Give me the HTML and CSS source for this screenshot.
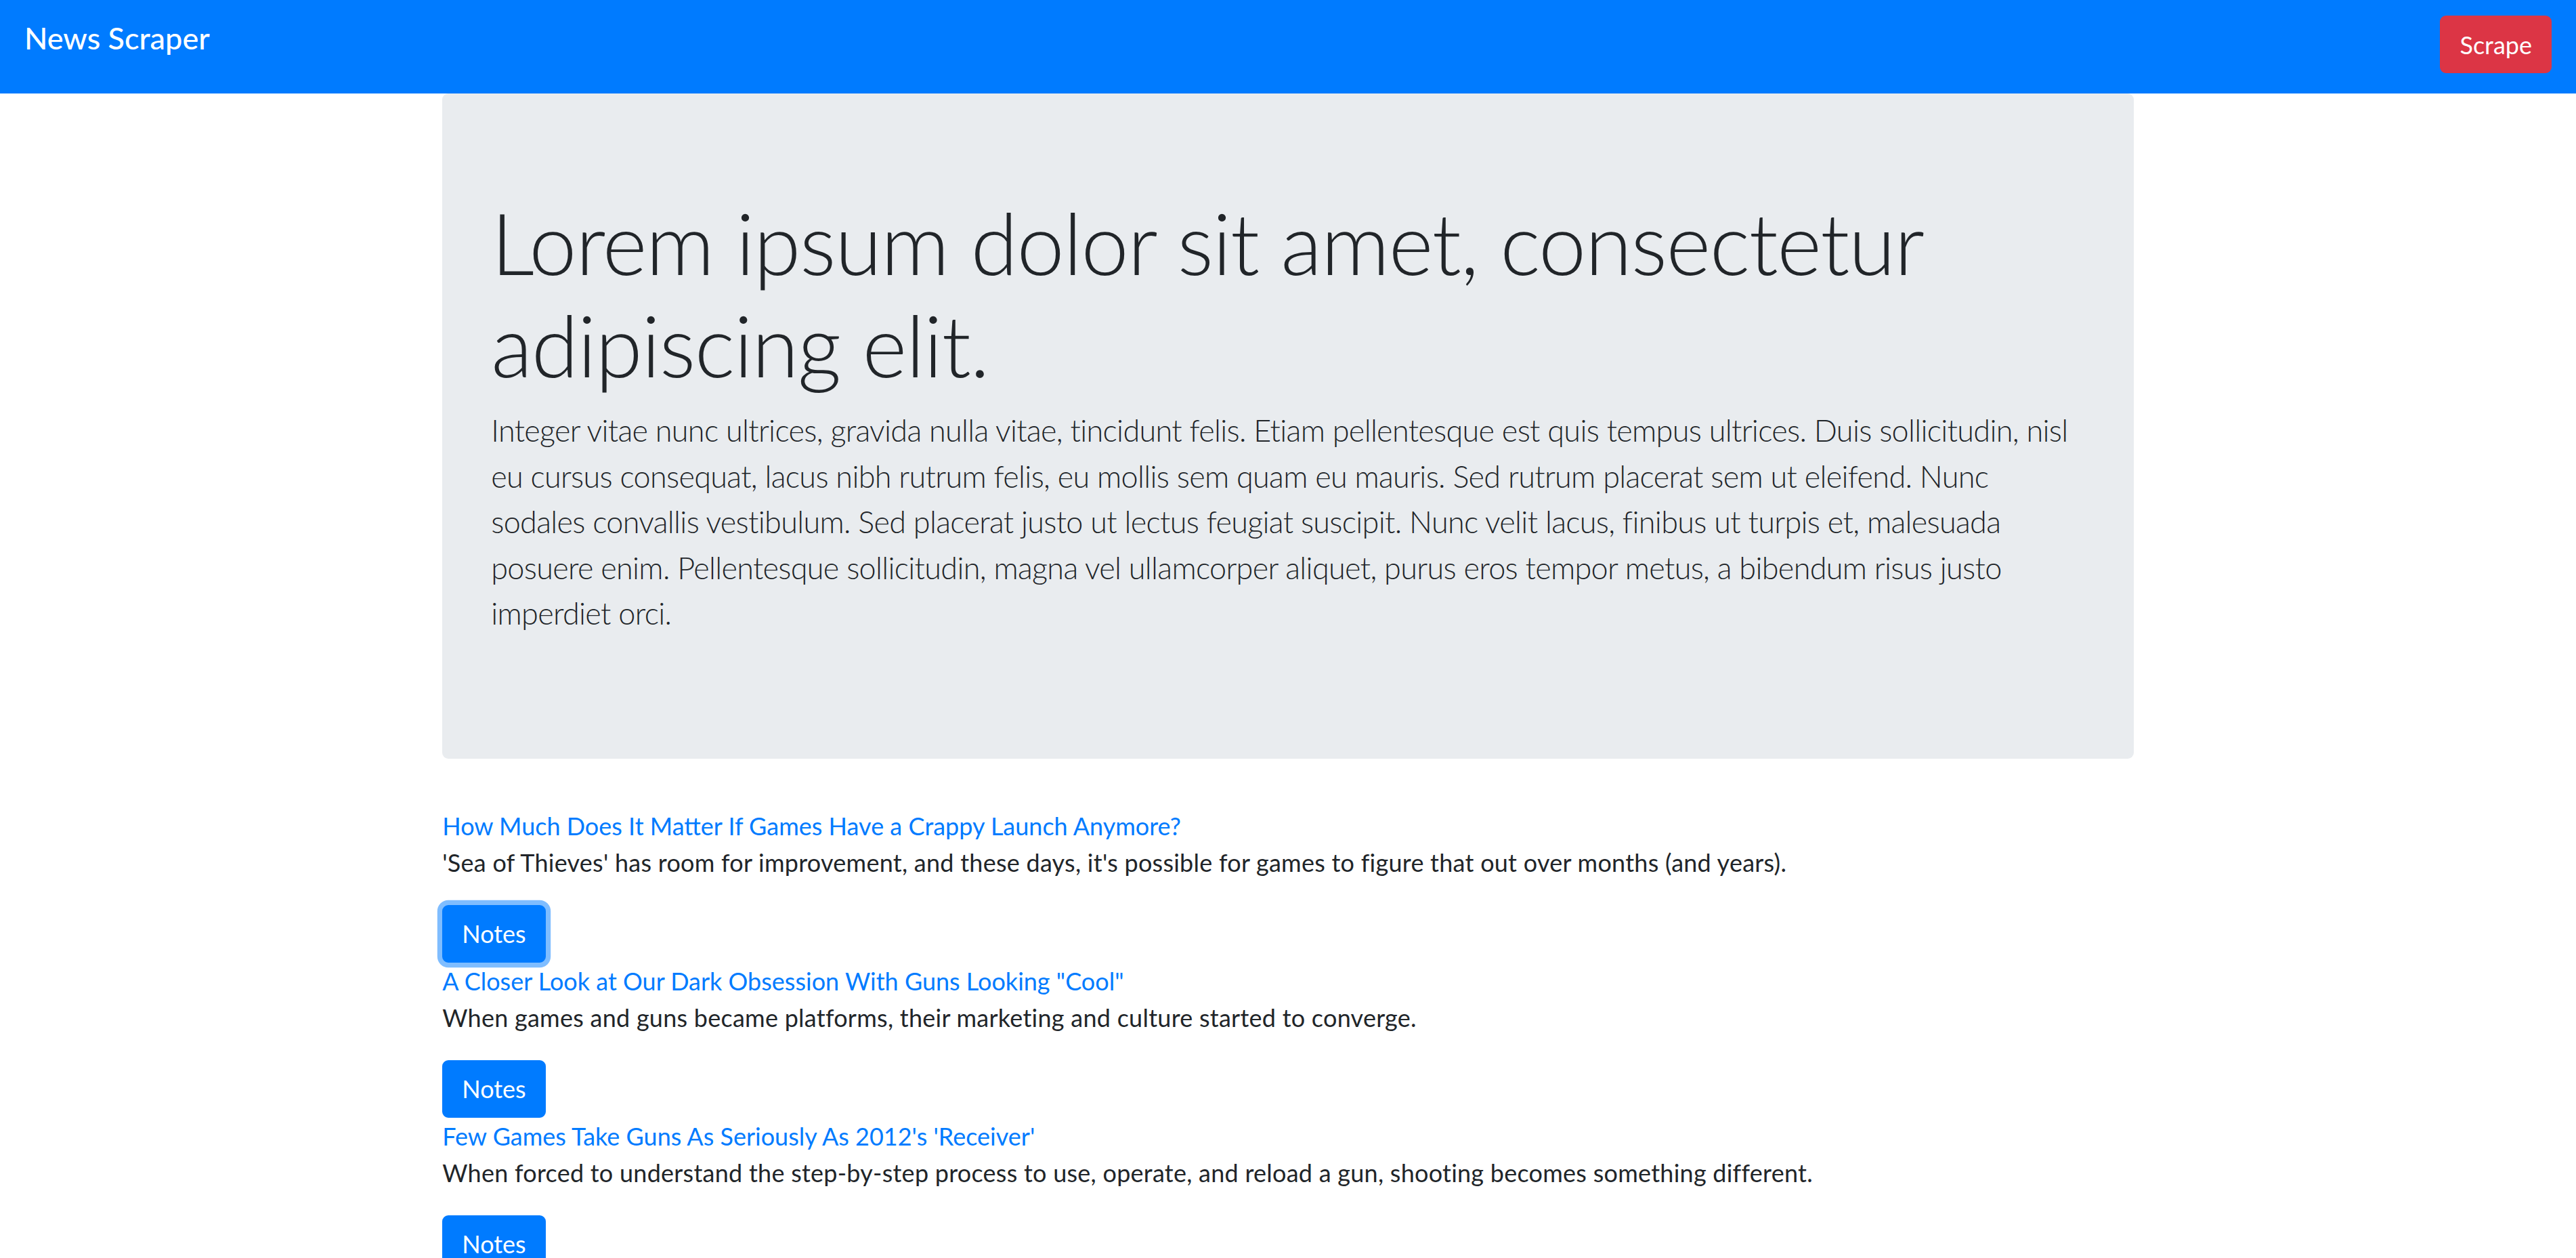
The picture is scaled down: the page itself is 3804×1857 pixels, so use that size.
FILE: index.html
```html
<!DOCTYPE html>
<html lang="en">
<head>
<meta charset="utf-8">
<title>News Scraper</title>
<link rel="stylesheet" href="styles.css">
</head>
<body>
<nav class="navbar">
  <a class="navbar-brand" href="#">News Scraper</a>
  <button class="btn btn-danger" type="button">Scrape</button>
</nav>

<main class="container">
  <section class="jumbotron">
    <h1 class="display-4">Lorem ipsum dolor sit amet, consectetur adipiscing elit.</h1>
    <p class="lead">Integer vitae nunc ultrices, gravida nulla vitae, tincidunt felis. Etiam pellentesque est quis tempus ultrices. Duis sollicitudin, nisl eu cursus consequat, lacus nibh rutrum felis, eu mollis sem quam eu mauris. Sed rutrum placerat sem ut eleifend. Nunc sodales convallis vestibulum. Sed placerat justo ut lectus feugiat suscipit. Nunc velit lacus, finibus ut turpis et, malesuada posuere enim. Pellentesque sollicitudin, magna vel ullamcorper aliquet, purus eros tempor metus, a bibendum risus justo imperdiet orci.</p>
  </section>

  <div class="articles">
    <article class="article">
      <a class="article-title" href="#">How Much Does It Matter If Games Have a Crappy Launch Anymore?</a>
      <p class="article-desc">'Sea of Thieves' has room for improvement, and these days, it's possible for games to figure that out over months (and years).</p>
      <button class="btn btn-primary is-focused" type="button">Notes</button>
    </article>
    <article class="article">
      <a class="article-title" href="#">A Closer Look at Our Dark Obsession With Guns Looking "Cool"</a>
      <p class="article-desc">When games and guns became platforms, their marketing and culture started to converge.</p>
      <button class="btn btn-primary" type="button">Notes</button>
    </article>
    <article class="article">
      <a class="article-title" href="#">Few Games Take Guns As Seriously As 2012's 'Receiver'</a>
      <p class="article-desc">When forced to understand the step-by-step process to use, operate, and reload a gun, shooting becomes something different.</p>
      <button class="btn btn-primary" type="button">Notes</button>
    </article>
  </div>
</main>
</body>
</html>
```

FILE: styles.css
```css
html, body {
  margin: 0;
  padding: 0;
}

body {
  font-family: Lato, "Liberation Sans", sans-serif;
  font-size: 36px;
  line-height: 1.5;
  font-weight: 400;
  color: #212529;
  background: #ffffff;
}

/* Navbar */
.navbar {
  display: flex;
  justify-content: space-between;
  align-items: flex-start;
  height: 138px;
  box-sizing: border-box;
  padding: 23px 36px 0;
  background-color: #007bff;
}

.navbar-brand {
  font-size: 45px;
  font-weight: 500;
  line-height: 67.5px;
  color: #ffffff;
  text-decoration: none;
  white-space: nowrap;
}

/* Buttons */
.btn {
  display: inline-block;
  font-family: inherit;
  font-size: 36px;
  line-height: 54px;
  font-weight: 400;
  padding: 13.5px 27px;
  border: 2.25px solid transparent;
  border-radius: 9px;
  color: #ffffff;
  cursor: pointer;
  margin: 0;
}

.btn-danger {
  background-color: #dc3545;
  border-color: #dc3545;
}

.btn-primary {
  background-color: #007bff;
  border-color: #007bff;
}

.btn-primary.is-focused {
  box-shadow: 0 0 0 7.2px rgba(0, 123, 255, 0.5);
}

/* Layout */
.container {
  max-width: 2565px;
  margin: 0 auto;
  padding: 0 33.75px;
  box-sizing: border-box;
}

.jumbotron {
  background-color: #e9ecef;
  border-radius: 9px;
  padding: 144px 72px;
  margin-bottom: 72px;
}

.display-4 {
  font-size: 126px;
  font-weight: 300;
  line-height: 1.2;
  letter-spacing: -1.5px;
  margin: 0 0 18px;
}

.lead {
  font-size: 45px;
  font-weight: 300;
  line-height: 1.5;
  letter-spacing: -0.7px;
  margin: 0 0 36px;
}

/* Articles */
.article-title {
  display: block;
  color: #007bff;
  text-decoration: none;
}

.article-desc {
  margin: 0 0 36px;
  letter-spacing: 0.25px;
}
```
